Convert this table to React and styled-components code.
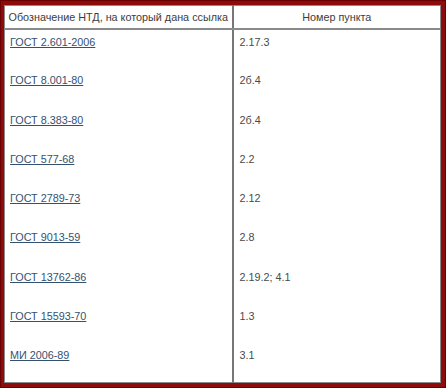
import React from "react";
import styled, { createGlobalStyle } from "styled-components";

const Global = createGlobalStyle`
  html, body {
    margin: 0;
    padding: 0;
    background: #ffffff;
  }
`;

const Frame = styled.div`
  width: 446px;
  height: 388px;
  box-sizing: border-box;
  background: #8e0b0b;
  border: 1px solid #6a0000;
  padding: 4px 4px 4px 3px;
  display: flex;
`;

const Table = styled.table`
  flex: 1;
  border-collapse: collapse;
  background: #ffffff;
  font-family: "Liberation Sans", Arial, sans-serif;
  font-size: 10.8px;
  color: #4a4a4a;
  border: 1px solid #8a8a8a;
  table-layout: fixed;
`;

const HeadCell = styled.th`
  font-weight: normal;
  text-align: center;
  height: 22px;
  padding: 0 3px;
  border-bottom: 2px solid #8a8a8a;
  border-right: ${(p) => (p.$last ? "none" : "2px solid #777777")};
  white-space: nowrap;
  color: #3c3c3c;
`;

const Cell = styled.td`
  vertical-align: top;
  height: 39px;
  box-sizing: border-box;
  padding: 6px 5px 0 ${(p) => (p.$right ? "6px" : "5px")};
  border-right: ${(p) => (p.$right ? "none" : "2px solid #777777")};
`;

const Link = styled.a`
  color: #34526f;
  text-decoration: underline;
`;

const rows = [
  ["ГОСТ 2.601-2006", "2.17.3"],
  ["ГОСТ 8.001-80", "2б.4"],
  ["ГОСТ 8.383-80", "2б.4"],
  ["ГОСТ 577-68", "2.2"],
  ["ГОСТ 2789-73", "2.12"],
  ["ГОСТ 9013-59", "2.8"],
  ["ГОСТ 13762-86", "2.19.2; 4.1"],
  ["ГОСТ 15593-70", "1.3"],
  ["МИ 2006-89", "3.1"],
];

export default function App() {
  return (
    <>
      <Global />
      <Frame>
        <Table>
          <colgroup>
            <col style={{ width: "228px" }} />
            <col />
          </colgroup>
          <thead>
            <tr>
              <HeadCell>Обозначение НТД, на который дана ссылка</HeadCell>
              <HeadCell $last>Номер пункта</HeadCell>
            </tr>
          </thead>
          <tbody>
            {rows.map(([doc, item]) => (
              <tr key={doc}>
                <Cell>
                  <Link href="#">{doc}</Link>
                </Cell>
                <Cell $right>{item}</Cell>
              </tr>
            ))}
          </tbody>
        </Table>
      </Frame>
    </>
  );
}
